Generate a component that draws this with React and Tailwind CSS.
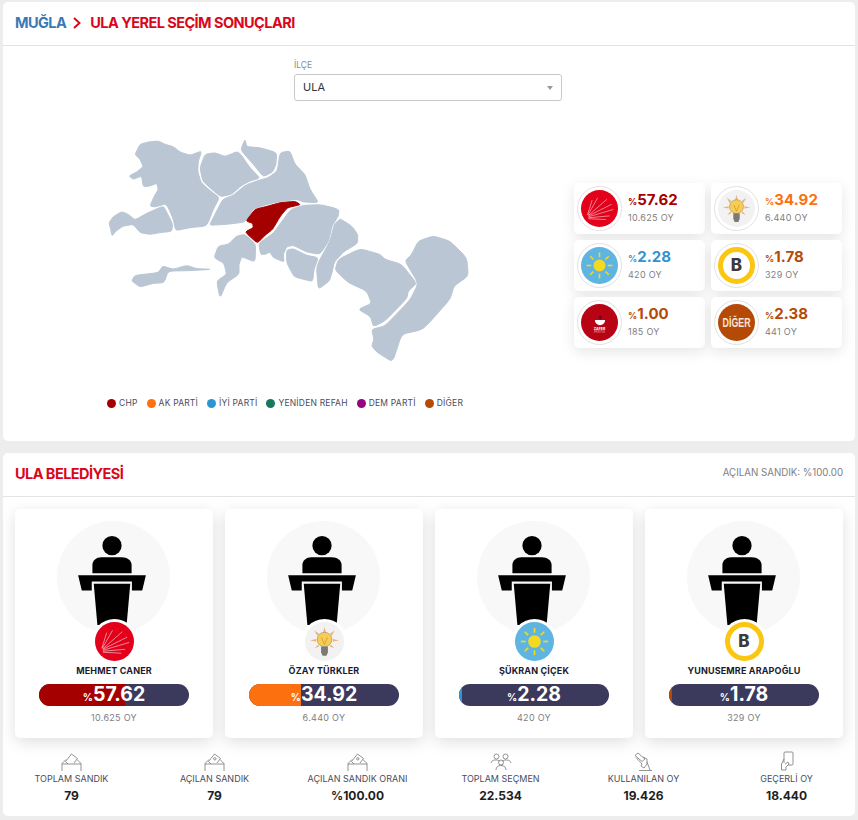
import React from "react";

const F = "font-['Inter','Liberation_Sans',sans-serif]";

const regions = [
  "M135 85 L150 55 L175 48 L205 45 L225 55 L250 62 L270 78 L300 88 L335 75 L325 105 L323 135 L333 170 L362 195 L388 215 L370 250 L350 300 L300 305 L257 314 L250 280 L235 245 L225 234 L195 243 L180 240 L192 212 L205 190 L200 172 L180 180 L160 182 L155 150 L130 160 L117 150 L140 138 L160 122 L150 100 Z",
  "M57 290 L70 272 L95 257 L115 265 L135 282 L170 262 L220 240 L232 262 L248 295 L245 316 L210 320 L180 325 L150 320 L130 295 L100 300 L78 315 L66 330 L62 310 Z",
  "M345 85 L375 80 L405 92 L445 75 L480 125 L510 156 L480 165 L455 178 L425 205 L392 212 L365 190 L338 165 L330 125 Z",
  "M465 40 L470 62 L510 65 L560 80 L558 115 L548 138 L520 152 L490 115 L452 72 Z",
  "M570 80 L600 75 L615 115 L645 145 L660 190 L686 230 L640 228 L620 220 L570 226 L520 238 L490 250 L466 288 L410 295 L358 298 L375 265 L398 220 L430 208 L465 178 L500 165 L535 155 L562 135 Z",
  "M468 285 L495 250 L535 240 L570 230 L615 226 L632 236 L592 245 L570 272 L548 310 L525 328 L502 352 L465 318 L490 305 L488 292 Z",
  "M640 238 L690 236 L730 245 L747 252 L745 270 L726 300 L716 345 L690 385 L650 378 L610 358 L590 362 L580 385 L582 408 L550 395 L540 378 L525 385 L512 385 L506 352 L550 322 L580 280 L603 250 Z",
  "M465 325 L497 355 L495 408 L455 392 L447 415 L447 445 L410 470 L390 516 L380 465 L410 445 L402 412 L372 395 L385 360 L415 355 L440 330 Z",
  "M125 465 L135 448 L205 440 L218 420 L250 430 L290 418 L320 428 L365 430 L300 434 L235 435 L222 470 L190 472 L150 483 Z",
  "M590 372 L610 368 L650 388 L685 395 L672 430 L668 466 L640 460 L612 452 L590 410 Z",
  "M750 278 L785 300 L803 325 L803 352 L760 378 L733 408 L726 440 L718 465 L685 490 L679 420 L720 345 L733 295 Z",
  "M810 368 L870 385 L885 400 L935 415 L980 472 L955 495 L950 518 L885 585 L850 602 L842 572 L805 550 L845 532 L830 495 L775 470 L735 432 L745 400 Z",
  "M945 405 L965 385 L985 345 L1030 330 L1080 345 L1130 395 L1135 450 L1092 480 L1080 520 L1000 610 L935 625 L908 708 L860 678 L845 660 L852 640 L845 610 L885 600 L960 522 L985 472 Z",
];

// rounds each corner of a region outline
const rounded = (d) => {
  const n = d.match(/\d+/g).map(Number);
  const pts = [];
  for (let i = 0; i < n.length; i += 2) pts.push([n[i], n[i + 1]]);
  const mix = (a, b, t) => [a[0] + (b[0] - a[0]) * t, a[1] + (b[1] - a[1]) * t];
  let out = "";
  pts.forEach((p, i) => {
    const prev = pts[(i - 1 + pts.length) % pts.length];
    const next = pts[(i + 1) % pts.length];
    const a = mix(p, prev, 0.22);
    const b = mix(p, next, 0.22);
    out += `${i === 0 ? "M" : "L"}${a[0]} ${a[1]} Q${p[0]} ${p[1]} ${b[0]} ${b[1]} `;
  });
  return out + "Z";
};

const Chp = () => (
  <svg viewBox="0 0 40 40" className="w-full h-full block">
    <circle cx="20" cy="20" r="20" fill="#e2001a" />
    <g stroke="#f6c9cf" strokeWidth="0.7">
      <path d="M7 27 L12 11" />
      <path d="M7.5 27 L18 8.5" />
      <path d="M8 27.5 L28 10" />
      <path d="M8 28 L33 15.5" />
      <path d="M8 29 L35 21" />
      <path d="M8 30 L31 28" />
      <path d="M8 31 L27 32" />
    </g>
  </svg>
);

const Akp = () => (
  <svg viewBox="0 0 40 40" className="w-full h-full block">
    <circle cx="20" cy="20" r="20" fill="#f2f2f2" />
    <g fill="#efb07c">
      <path d="M20 5 L21.5 11 L18.5 11 Z" />
      <path d="M9.5 8.5 L14.5 12 L12.5 14 Z" />
      <path d="M30.5 8.5 L27.5 14 L25.5 12 Z" />
      <path d="M5 19 L11.5 17.5 L11.5 20 Z" />
      <path d="M35 19 L28.5 20 L28.5 17.5 Z" />
      <path d="M10 27 L13.5 23 L14.5 25 Z" />
      <path d="M30 27 L25.5 25 L26.5 23 Z" />
    </g>
    <circle cx="20" cy="18" r="7.5" fill="#f9cc52" stroke="#8d8676" strokeWidth="0.6" />
    <path d="M16.5 25 H23.5 V31 L22 34.5 H18 L16.5 31 Z" fill="#7d7a75" />
    <path d="M17 16 L20 23 L23 16" fill="none" stroke="#b08a35" strokeWidth="0.6" />
  </svg>
);

const Iyi = () => (
  <svg viewBox="0 0 40 40" className="w-full h-full block">
    <circle cx="20" cy="20" r="20" fill="#5fb5e2" />
    <circle cx="20" cy="20" r="6.5" fill="#f5d91f" />
    <g stroke="#f5d91f" strokeWidth="1.7">
      <path d="M20 6 V11" />
      <path d="M20 29 V34" />
      <path d="M6 20 H11" />
      <path d="M29 20 H34" />
      <path d="M10 10 L13.5 13.5" />
      <path d="M30 10 L26.5 13.5" />
      <path d="M10 30 L13.5 26.5" />
      <path d="M30 30 L26.5 26.5" />
    </g>
  </svg>
);

const Bag = () => (
  <div className="w-full h-full rounded-full bg-white border-[5px] border-[#fbc612] flex items-center justify-center">
    <span className={`${F} font-extrabold text-[#40393a] text-[17px] leading-none`}>B</span>
  </div>
);

const Zafer = () => (
  <div className="w-full h-full rounded-full bg-[#b70314] flex flex-col items-center justify-center">
    <svg viewBox="0 0 14 13" className="w-[12px] h-[11px] block mt-[3px]">
      <path d="M1 6 H13 C13 10 10 12 7 12 C4 12 1 10 1 6 Z" fill="#fff" />
      <path d="M7 5 C4 3 7 2 6 0 C9 1 10 3 8 5 Z" fill="#5e0a12" />
    </svg>
    <span className={`${F} text-white text-[3.5px] font-bold leading-[4px] mt-[1px]`}>ZAFER</span>
    <span className={`${F} text-[#eab] text-[3px] leading-[3px]`}>PARTİSİ</span>
  </div>
);

const Diger = () => (
  <div className="w-full h-full rounded-full bg-[#b54a07] flex items-center justify-center">
    <span className="font-['Liberation_Sans',sans-serif] text-[#f6e5d6] font-bold text-[13px] leading-none scale-x-[0.68]">DİĞER</span>
  </div>
);

const parties = [
  { logo: <Chp />, pct: "57.62", oy: "10.625 OY", color: "text-[#a50000]" },
  { logo: <Akp />, pct: "34.92", oy: "6.440 OY", color: "text-[#fd700f]" },
  { logo: <Iyi />, pct: "2.28", oy: "420 OY", color: "text-[#2f95d0]" },
  { logo: <Bag />, pct: "1.78", oy: "329 OY", color: "text-[#b54a07]" },
  { logo: <Zafer />, pct: "1.00", oy: "185 OY", color: "text-[#b54a07]" },
  { logo: <Diger />, pct: "2.38", oy: "441 OY", color: "text-[#b54a07]" },
];

const legend = [
  ["CHP", "bg-[#a50000]"],
  ["AK PARTİ", "bg-[#fd700f]"],
  ["İYİ PARTİ", "bg-[#2f95d0]"],
  ["YENİDEN REFAH", "bg-[#17785c]"],
  ["DEM PARTİ", "bg-[#93067f]"],
  ["DİĞER", "bg-[#b54a07]"],
];

const candidates = [
  { name: "MEHMET CANER", logo: <Chp />, pct: 57.62, oy: "10.625 OY", fill: "bg-[#a50000]" },
  { name: "ÖZAY TÜRKLER", logo: <Akp />, pct: 34.92, oy: "6.440 OY", fill: "bg-[#fd700f]" },
  { name: "ŞÜKRAN ÇİÇEK", logo: <Iyi />, pct: 2.28, oy: "420 OY", fill: "bg-[#2f95d0]" },
  { name: "YUNUSEMRE ARAPOĞLU", logo: <Bag />, pct: 1.78, oy: "329 OY", fill: "bg-[#b54a07]" },
];

const Podium = () => (
  <svg viewBox="0 0 204 268" className="w-[68px] h-[89px] block mr-[2px]">
    <circle cx="102" cy="29" r="29" />
    <path d="M43 112 V87 C43 74 55 64 70 64 H132 C148 64 161 74 161 87 V112 Z" />
    <path d="M0 118 H204 L193 164 H162 V137 H41 V164 H11 Z" />
    <path d="M47 144 H157 L146 268 H58 Z" />
  </svg>
);

const Ballot = ({ mark }) => (
  <svg viewBox="0 0 21 18" className="w-[21px] h-[18px] block" fill="none" stroke="#777" strokeWidth="0.8">
    <path d="M1 18 V10.5 L5 6.5 M16 6.5 L20 10.5 V18" />
    <path d="M1 11 H20" />
    <path d="M4.5 8.5 L10.5 1 L16.5 5.5 L13 10" />
    <path d="M4.5 8.5 L7 11" />
    {mark && <circle cx="10.8" cy="5.8" r="1.2" />}
  </svg>
);

const Voters = () => (
  <svg viewBox="0 0 22 18" className="w-[22px] h-[18px] block" fill="none" stroke="#777" strokeWidth="0.8">
    <circle cx="6.5" cy="3.5" r="2.5" />
    <circle cx="15.5" cy="3.5" r="2.5" />
    <circle cx="11" cy="9.5" r="2.5" />
    <path d="M1 10 C2 7 4 7 6.5 7 C8 7 9 8 9.5 8.5" />
    <path d="M21 10 C20 7 18 7 15.5 7 C14 7 13 8 12.5 8.5" />
    <path d="M6 17 C6 14 8 12.5 11 12.5 C14 12.5 16 14 16 17" />
  </svg>
);

const HandBallot = () => (
  <svg viewBox="0 0 19 19" className="w-[19px] h-[19px] block" fill="none" stroke="#777" strokeWidth="0.8">
    <path d="M1 3.5 L4 1 L11 7 L8 9.5 Z" />
    <path d="M2 5.5 L8 12 L7 14 L10 16 L13 12 L13 7 L9 5" />
    <path d="M5 18.5 H18" />
    <path d="M13 10 L16 18" />
  </svg>
);

const HandPhone = () => (
  <svg viewBox="0 0 14 20" className="w-[14px] h-[20px] block" fill="none" stroke="#777" strokeWidth="0.8">
    <path d="M4 12 V2 C4 1.4 4.4 1 5 1 H12 C12.6 1 13 1.4 13 2 V13 C13 13.6 12.6 14 12 14 H8" />
    <path d="M4 8 L1.5 13 V19 H6 V16 L9 13 L8 11 L5 13" />
  </svg>
);

const stats = [
  { icon: <Ballot />, label: "TOPLAM SANDIK", value: "79" },
  { icon: <Ballot mark />, label: "AÇILAN SANDIK", value: "79" },
  { icon: <Ballot mark />, label: "AÇILAN SANDIK ORANI", value: "%100.00" },
  { icon: <Voters />, label: "TOPLAM SEÇMEN", value: "22.534" },
  { icon: <HandBallot />, label: "KULLANILAN OY", value: "19.426" },
  { icon: <HandPhone />, label: "GEÇERLİ OY", value: "18.440" },
];

const App = () => {
  return (
    <div className={`${F} bg-[#ededed] w-[858px] h-[820px] overflow-hidden px-[3px] pt-[2px] flex flex-col gap-[12px]`}>
      <section className="bg-white rounded-[5px] h-[439px] flex flex-col shrink-0">
        <div className="h-[44px] pb-[2px] border-b border-[#e3e3e3] px-[12px] flex items-center gap-[6px] text-[14.5px] font-bold tracking-[-0.55px]">
          <span className="text-[#3b79b5]">MUĞLA</span>
          <svg viewBox="0 0 8 12" className="w-[8px] h-[12px] mx-[1px]" fill="none" stroke="#d9061c" strokeWidth="1.9">
            <path d="M1 1 L6.5 6 L1 11" />
          </svg>
          <span className="ml-[2px] text-[#d9061c]">ULA YEREL SEÇİM SONUÇLARI</span>
        </div>

        <div className="w-[268px] ml-[291px] mt-[14px]">
          <div className="text-[8.5px] leading-[10px] text-[#8a8a8a]">İLÇE</div>
          <div className="mt-[4px] h-[27px] border border-[#c8c8c8] rounded-[3px] flex items-center justify-between pl-[8px] pr-[8px] text-[11px] text-[#333]">
            <span>ULA</span>
            <span className="w-0 h-0 border-x-[3.5px] border-x-transparent border-t-[4px] border-t-[#999]" />
          </div>
        </div>

        <div className="flex items-start ml-[87px] mt-[25px]">
          <div className="w-[390px]">
            <svg viewBox="0 0 1170 750" className="w-[390px] h-[250px] block">
              {regions.map((d, i) => (
                <path key={i} d={rounded(d)} fill={i === 5 ? "#a50000" : "#bac6d4"} stroke={i === 5 ? "#a50000" : "#bac6d4"} strokeWidth="3" strokeLinejoin="round" />
              ))}
            </svg>
            <div className="flex items-center ml-[17px] mt-[21px] gap-[9px]">
              {legend.map(([name, dot]) => (
                <div key={name} className="flex items-center gap-[3px] text-[8.5px] leading-[12px] tracking-[0.2px] text-[#4b4b5c] whitespace-nowrap">
                  <span className={`w-[9px] h-[9px] rounded-full ${dot}`} />
                  {name}
                </div>
              ))}
            </div>
          </div>

          <div className="grid grid-cols-[131px_131px] gap-x-[6px] gap-y-[6px] ml-[94px] mt-[57px]">
            {parties.map((p) => (
              <div key={p.pct} className="h-[51px] bg-white rounded-[5px] shadow-[0_4px_14px_rgba(0,0,0,0.1)] flex items-center pl-[3px] gap-[6px]">
                <div className="w-[45px] h-[45px] shrink-0 rounded-full border border-[#e2e2e2] p-[3px]">{p.logo}</div>
                <div>
                  <div className={`flex items-baseline font-bold ${p.color}`}>
                    <span className="text-[9px] leading-none">%</span>
                    <span className="text-[15px] leading-[16px] tracking-[0.1px]">{p.pct}</span>
                  </div>
                  <div className="text-[9px] leading-[14px] mt-[3px] tracking-[0.3px] text-[#808080]">{p.oy}</div>
                </div>
              </div>
            ))}
          </div>
        </div>
      </section>

      <section className="bg-white rounded-[5px] h-[363px] shrink-0 flex flex-col">
        <div className="h-[44px] pb-[2px] border-b border-[#e3e3e3] px-[12px] flex items-center justify-between shrink-0">
          <span className="text-[14.5px] font-bold tracking-[-0.55px] text-[#d9061c]">ULA BELEDİYESİ</span>
          <span className="text-[9.7px] text-[#808080]">AÇILAN SANDIK: %100.00</span>
        </div>

        <div className="grid grid-cols-4 gap-[12px] px-[12px] mt-[12px]">
          {candidates.map((c) => (
            <div key={c.name} className="h-[229px] bg-white rounded-[5px] shadow-[0_4px_16px_rgba(0,0,0,0.13)] flex flex-col items-center pt-[12px]">
              <div className="w-[113px] h-[113px] mr-[2px] rounded-full bg-[#f8f8f8] flex justify-center pt-[15px]">
                <Podium />
              </div>
              <div className="relative w-[45px] h-[45px] -mt-[15px] rounded-full border-[3px] border-white bg-white">{c.logo}</div>
              <div className="text-[9px] font-bold text-[#1b1b2f] leading-[12px] mt-[1px] tracking-[0.15px] whitespace-nowrap">{c.name}</div>
              <div className="relative w-[150px] h-[22px] rounded-full bg-[#3c3a5c] mt-[7px] flex items-center justify-center">
                <div className="absolute inset-0 rounded-full overflow-hidden">
                  <div className={`h-full ${c.fill}`} style={{ width: `${c.pct}%` }} />
                </div>
                <span className="relative text-white font-bold flex items-baseline leading-none">
                  <span className="text-[10px]">%</span>
                  <span className="text-[19.5px]">{c.pct.toFixed(2)}</span>
                </span>
              </div>
              <div className="text-[9px] text-[#808080] mt-[6px] leading-[12px] tracking-[0.3px]">{c.oy}</div>
            </div>
          ))}
        </div>

        <div className="grid grid-cols-6 -mx-[3px] mt-[13px]">
          {stats.map((s) => (
            <div key={s.label} className="flex flex-col items-center">
              <div className="h-[20px] flex items-end">{s.icon}</div>
              <div className="text-[9px] leading-[12px] mt-[2px] text-[#4b4b5c] whitespace-nowrap">{s.label}</div>
              <div className="text-[12px] font-bold leading-[16px] mt-[3px] text-[#1e1e1e]">{s.value}</div>
            </div>
          ))}
        </div>
      </section>
    </div>
  );
};

export default App;
